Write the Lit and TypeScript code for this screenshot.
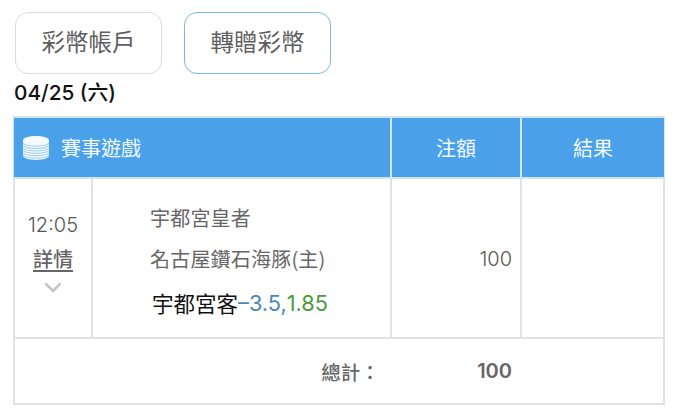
import { LitElement, html, css } from "lit";
import { customElement } from "lit/decorators.js";

@customElement("app-root")
export class AppRoot extends LitElement {
  static styles = css`
    :host {
      display: block;
      width: 690px;
      height: 416px;
      background: #fff;
      overflow: hidden;
      font-family: "Noto Sans CJK TC", sans-serif;
      color: #666;
    }
    .wrap { padding: 12px 24px 0 13px; }
    .tabs { display: flex; gap: 22px; padding-left: 2px; }
    .tab {
      box-sizing: border-box;
      width: 147px;
      height: 62px;
      border: 1px solid #dcdcdc;
      border-radius: 13px;
      display: flex;
      align-items: center;
      justify-content: center;
      font-size: 23.5px;
      color: #5f5f5f;
      line-height: 1;
      padding-bottom: 2px;
    }
    .tab.active { border-color: #7db9d8; }
    .date {
      height: 42px;
      box-sizing: border-box;
      padding: 7px 0 0 1px;
      font-size: 20.75px;
      font-weight: 500;
      line-height: 24px;
      color: #111;
      font-family: "Inter", "Noto Sans CJK TC", sans-serif;
    }
    .table {
      display: grid;
      grid-template-columns: 78px 299px 130px 145px;
      width: 652px;
    }
    .head {
      height: 63px;
      box-sizing: border-box;
      background: #4aa1ea;
      color: #f4fbff;
      font-size: 20px;
      display: flex;
      align-items: center;
      justify-content: center;
      border-top: 2px solid #cfe3f3;
      border-bottom: 2px solid #cfe6f7;
      border-left: 2px solid #d0e6f6;
    }
    .head.title {
      grid-column: 1 / span 2;
      justify-content: flex-start;
      gap: 12px;
      padding-left: 9px;
      border-left: 1px solid #cfe3f3;
    }
    .head.last { border-right: 1px solid #d6e6f2; }
    .cell {
      box-sizing: border-box;
      height: 160px;
      border-left: 2px solid #e2e2e2;
      border-bottom: 2px solid #e2e2e2;
      font-size: 20px;
    }
    .cell.last { border-right: 2px solid #e2e2e2; }
    .time {
      display: flex;
      flex-direction: column;
      align-items: center;
      padding-top: 32px;
      color: #777;
    }
    .clock { font-family: "Inter", sans-serif; font-size: 20px; line-height: 28px; font-weight: 300; color: #555; }
    .more {
      margin-top: 8px;
      font-size: 20px;
      font-weight: 500;
      line-height: 24px;
      color: #666;
      text-decoration: underline;
      text-underline-offset: 3px;
    }
    .chev { margin-top: 11px; display: block; }
    .match {
      padding: 25px 0 0 57px;
      display: flex;
      flex-direction: column;
      gap: 13px;
      font-size: 20px;
      letter-spacing: 0.2px;
      line-height: 28px;
      color: #666;
    }
    .pick { padding-left: 2px; color: #111; display: flex; font-size: 21.5px; letter-spacing: 0; margin-top: 3px; }
    .hc { color: #4a86b8; font-family: "Inter", sans-serif; font-size: 21.75px; font-weight: 400; }
    .odds { color: #4c9a3c; font-family: "Inter", sans-serif; font-size: 21.75px; font-weight: 400; }
    .stake {
      display: flex;
      justify-content: flex-end;
      padding: 66px 8px 0 0;
      font-family: "Inter", sans-serif;
      font-size: 20px;
      line-height: 28px;
      font-weight: 300;
      color: #555;
    }
    .foot {
      grid-column: 1 / -1;
      box-sizing: border-box;
      height: 66px;
      border: 2px solid #e2e2e2;
      border-top: 0;
      display: flex;
      align-items: center;
      justify-content: flex-end;
      font-size: 19.5px;
      font-weight: 500;
      color: #666;
      padding-right: 151px;
    }
    .total { width: 156px; display: block; }
    .amount { font-family: "Inter", sans-serif; font-size: 20px; font-weight: 600; color: #666; }
  `;

  render() {
    return html`
      <div class="wrap">
        <div class="tabs">
          <div class="tab">彩幣帳戶</div>
          <div class="tab active">轉贈彩幣</div>
        </div>
        <div class="date">04/25 (六)</div>
        <div class="table">
          <div class="head title">
            <svg width="26" height="26" viewBox="1 1 24 24" aria-hidden="true">
              <path d="M1 6c0-2.500 5.400-4 12-4s12 1.500 12 4v14c0 2.500-5.400 4-12 4S1 22.500 1 20z" fill="#f3f9fd"/>
              <g fill="none" stroke="#8fc4ee" stroke-width="0.8">
                <path d="M1 8.500c2 2 6.500 2.800 12 2.800s10-.8 12-2.800"/>
                <path d="M1 10.700c2 2 6.500 2.800 12 2.800s10-.8 12-2.800"/>
                <path d="M1 12.900c2 2 6.500 2.800 12 2.800s10-.8 12-2.800"/>
                <path d="M1 15.100c2 2 6.500 2.800 12 2.800s10-.8 12-2.800"/>
                <path d="M1 17.300c2 2 6.500 2.800 12 2.800s10-.8 12-2.800"/>
                <path d="M1 19.500c2 2 6.500 2.800 12 2.800s10-.8 12-2.800"/>
              </g>
            </svg>
            <span>賽事遊戲</span>
          </div>
          <div class="head">注額</div>
          <div class="head last">結果</div>

          <div class="cell time">
            <span class="clock">12:05</span>
            <span class="more">詳情</span>
            <svg class="chev" width="18" height="11" viewBox="0 0 18 11" aria-hidden="true">
              <path d="M1.500 1.500l7.500 7.500 7.500-7.500" fill="none" stroke="#c4c4c4" stroke-width="2.500"/>
            </svg>
          </div>
          <div class="cell match">
            <span>宇都宮皇者</span>
            <span>名古屋鑽石海豚(主)</span>
            <span class="pick">宇都宮客<span class="hc">–3.5,</span><span class="odds">1.85</span></span>
          </div>
          <div class="cell stake">100</div>
          <div class="cell last"></div>

          <div class="foot">
            <span class="total">總計：</span>
            <span class="amount">100</span>
          </div>
        </div>
      </div>
    `;
  }
}
